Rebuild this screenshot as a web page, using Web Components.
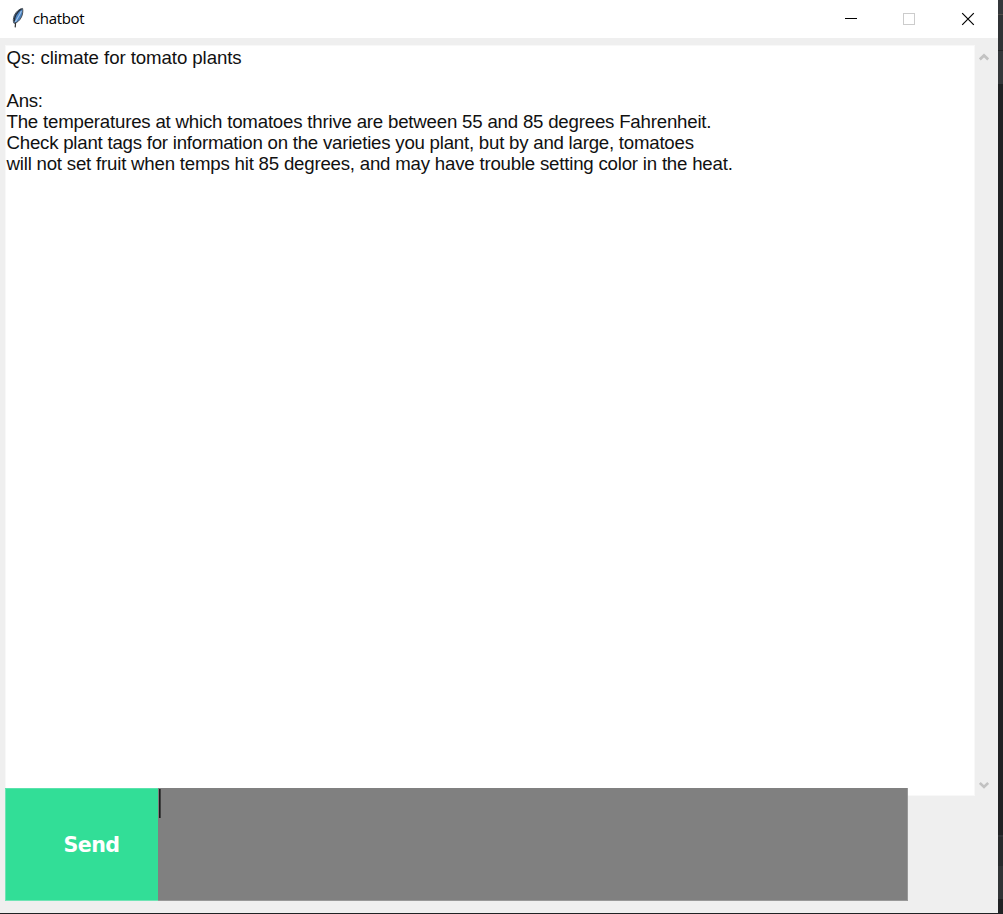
<!DOCTYPE html>
<html lang="en">
<head>
<meta charset="utf-8">
<title>chatbot</title>
<style>
html,body{margin:0;height:914px;overflow:hidden;background:#202224}
</style>
</head>
<body>
<chat-window></chat-window>
<script>
const define=(name,html)=>customElements.define(name,class extends HTMLElement{
  constructor(){
    super();
    const t=document.createElement('template');
    t.innerHTML=html.trim();
    this.attachShadow({mode:'open'}).append(t.content.cloneNode(true));
  }
});

define('title-bar',`
<style>
:host{display:flex;align-items:center;height:38px;background:#fff;font:15px "Open Sans","Noto Sans",sans-serif;color:#000}
.feather{width:16px;height:22px;margin:-2px 0 0 10px;flex:none}
.name{margin:-2px 0 0 7px;line-height:20px;letter-spacing:-.33px}
.controls{display:flex;margin-left:auto;width:176px;height:38px}
.controls svg{width:58px;height:38px;flex:none}
.controls svg+svg{width:59px}
</style>
<svg class="feather" viewBox="0 0 16 22">
 <path d="M12.6 1.4C9 2 6 4.8 4.4 8.3C3.2 11 2.9 14.5 4 16.3C6.7 16 9.8 13.6 11.4 10.2C12.6 7.4 13.2 4.5 12.6 1.4Z" fill="#4a82c0" stroke="#4c5158" stroke-width="1"/>
 <path d="M4.4 14.5C4.3 9.5 6.7 5.2 11.4 2" fill="none" stroke="#252d36" stroke-width="1.3"/>
 <path d="M11.4 4C9.8 8 7.5 11.2 5.2 15" fill="none" stroke="#9cc2ea" stroke-width="1.1"/>
 <path d="M5.6 15.6L5.2 20.4" stroke="#333" stroke-width="1.2"/>
</svg>
<span class="name"><slot></slot></span>
<div class="controls">
 <svg viewBox="0 0 58 38"><path d="M23 18.5H35" stroke="#000"/></svg>
 <svg viewBox="0 0 59 38"><rect x="23.5" y="13.5" width="11" height="11" fill="none" stroke="#ccc"/></svg>
 <svg viewBox="0 0 59 38"><path d="M23.2 13.2L34.8 24.8M34.8 13.2L23.2 24.8" stroke="#000" stroke-width="1.2"/></svg>
</div>`);

define('chat-line',`
<style>:host{display:block;height:21.25px;line-height:21.25px;white-space:pre}</style><slot></slot>`);

define('chat-log',`
<style>
:host{display:block;box-sizing:border-box;width:970px;height:751px;padding:2.2px 1.5px;background:#fff;color:#111;
font:18.67px "Liberation Sans",Arial,sans-serif;box-shadow:inset 0 0 0 1px #f8f8f8}
</style><slot></slot>`);

define('scroll-bar',`
<style>
:host{display:flex;flex-direction:column;justify-content:space-between;align-items:center;width:17px;height:751px;box-sizing:border-box;padding:8px 0 6px}
svg{width:10px;height:9px}
</style>
<svg viewBox="0 0 10 9"><path d="M.8 6.4L5 2.4L9.2 6.4" fill="none" stroke="#c2c2c2" stroke-width="2.7"/></svg>
<svg viewBox="0 0 10 9"><path d="M.8 2L5 6L9.2 2" fill="none" stroke="#c2c2c2" stroke-width="2.7"/></svg>`);

define('message-composer',`
<style>
:host{display:flex;position:relative;width:903px;height:113px;margin-top:-8px}
button{width:153px;height:113px;border:0;border-radius:0;margin:0;padding:0 0 0 20px;background:#32de97;color:#fff;
font:bold 20.6px/28px "DejaVu Sans",Verdana,sans-serif;letter-spacing:-.5px;box-shadow:inset 0 1px #5ae2ac,inset 0 -1px #70e4b5,inset 1px 0 #70e4b5}
.entry{flex:1;background:#808080;box-shadow:inset -1px -1px #989898}
.caret{width:1px;height:29px;margin:1px 0 0 1px;background:#1c1c1c;border-right:1px solid #404040}
</style>
<button><slot></slot></button><div class="entry"><div class="caret"></div></div>`);

define('desktop-edge',`
<style>
:host{display:block;width:5px;height:914px;background:linear-gradient(#34373b 0 14px,#514c49 14px 15px,#303336 15px 50px,#222426 50px 51px,#34373a 51px 84px,#202224 84px 835px,#303336 835px 837px,#282b2d 837px 866px,#313436 866px 899px,#202224 899px)}
</style>`);

define('chat-window',`
<style>
:host{display:flex;width:1003px;height:914px}
.window{width:998px;height:913px;background:#efefef}
.content{padding:7px 0 0 5px}
.row{display:flex}
.question{letter-spacing:-.08px}
.label{letter-spacing:-.3px}
.first{letter-spacing:-.205px}
.second{letter-spacing:-.23px}
.third{letter-spacing:-.21px}
</style>
<div class="window">
 <title-bar>chatbot</title-bar>
 <div class="content">
  <div class="row">
   <chat-log>
    <chat-line class="question">Qs: climate for tomato plants</chat-line>
    <chat-line> </chat-line>
    <chat-line class="label">Ans:</chat-line>
    <chat-line class="first">The temperatures at which tomatoes thrive are between 55 and 85 degrees Fahrenheit.</chat-line>
    <chat-line class="second">Check plant tags for information on the varieties you plant, but by and large, tomatoes</chat-line>
    <chat-line class="third">will not set fruit when temps hit 85 degrees, and may have trouble setting color in the heat.</chat-line>
   </chat-log>
   <scroll-bar></scroll-bar>
  </div>
  <message-composer>Send</message-composer>
 </div>
</div>
<desktop-edge></desktop-edge>`);
</script>
</body>
</html>
